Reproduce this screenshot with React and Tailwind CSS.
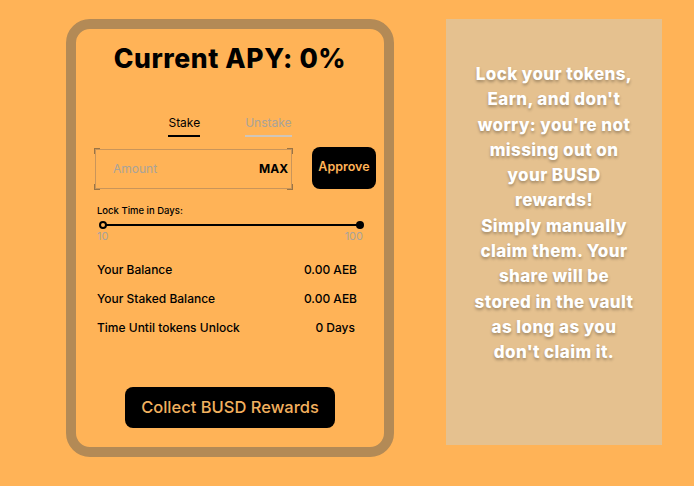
import React, { useState } from "react";

const panelLines = [
  "Lock your tokens,",
  "Earn, and don't",
  "worry: you're not",
  "missing out on",
  "your BUSD",
  "rewards!",
  "Simply manually",
  "claim them. Your",
  "share will be",
  "stored in the vault",
  "as long as you",
  "don't claim it.",
];

const Tab = ({ label, active, onClick }) => (
  <button className="flex flex-col items-stretch" onClick={onClick}>
    <span className={active ? "text-black" : "text-[#a9a39a]"}>{label}</span>
    <span className={"mt-[3px] h-[2px] " + (active ? "bg-black" : "bg-[#cfc6ba]")} />
  </button>
);

const StakeCard = () => {
  const [tab, setTab] = useState("stake");
  const [amount, setAmount] = useState("");

  return (
    <div className="w-[328px] h-[438px] rounded-[24px] border-[10px] border-[#b38a56] bg-[#ffb357] flex flex-col items-center">
      <div className="mt-[9px] text-[26.5px] leading-[40px] font-extrabold text-black tracking-[0.6px]">
        Current APY: 0%
      </div>

      <div className="mt-[36px] flex gap-[45px] text-[12px] leading-[18px]">
        <Tab label="Stake" active={tab === "stake"} onClick={() => setTab("stake")} />
        <Tab label="Unstake" active={tab === "unstake"} onClick={() => setTab("unstake")} />
      </div>

      <div className="mt-[12px] w-full pl-[19px] pr-[8px] flex items-center justify-between">
        <div className="relative w-[197px] h-[40px] border border-[#c9955a] flex items-center pl-[17px] pr-[3px]">
          <span className="absolute -left-[2px] -top-[2px] w-[6px] h-[6px] border-l border-t border-[#9a7444]" />
          <span className="absolute -right-[2px] -top-[2px] w-[6px] h-[6px] border-r border-t border-[#9a7444]" />
          <span className="absolute -left-[2px] -bottom-[2px] w-[6px] h-[6px] border-l border-b border-[#9a7444]" />
          <span className="absolute -right-[2px] -bottom-[2px] w-[6px] h-[6px] border-r border-b border-[#9a7444]" />
          <input
            value={amount}
            onChange={(e) => setAmount(e.target.value)}
            placeholder="Amount"
            className="flex-1 min-w-0 bg-transparent outline-none text-[12px] placeholder:text-[#a9a39a]"
          />
          <span className="text-[12px] font-bold text-black">MAX</span>
        </div>
        <button className="w-[64px] h-[42px] -mt-[3px] rounded-[8px] bg-black text-[#ffb357] text-[12.5px] font-semibold">
          Approve
        </button>
      </div>

      <div className="mt-[15px] w-full px-[21px]">
        <div className="text-[9.5px] leading-[14px] text-black font-medium">Lock Time in Days:</div>
        <div className="relative mt-[3px] h-[8px] mx-[3px]">
          <div className="absolute left-0 right-0 top-[3px] h-[2px] bg-black" />
          <div className="absolute -left-[1px] top-0 w-[8px] h-[8px] rounded-full border-2 border-black bg-[#ffb357]" />
          <div className="absolute -right-[4px] top-0 w-[8px] h-[8px] rounded-full bg-black" />
        </div>
        <div className="flex justify-between text-[11px] leading-[14px] text-[#a9a39a]">
          <span>10</span>
          <span>100</span>
        </div>
      </div>

      <div className="mt-[18px] w-full pl-[21px] pr-[27px] flex flex-col gap-[11px] text-[12px] leading-[18px] font-medium text-black">
        <div className="flex justify-between">
          <span>Your Balance</span>
          <span>0.00 AEB</span>
        </div>
        <div className="flex justify-between">
          <span>Your Staked Balance</span>
          <span>0.00 AEB</span>
        </div>
        <div className="flex justify-between">
          <span>Time Until tokens Unlock</span>
          <span className="pr-[2px]">0 Days</span>
        </div>
      </div>

      <button className="mt-[50px] w-[210px] h-[41px] rounded-[8px] bg-black text-[#f2b15f] text-[16.5px] font-medium">
        Collect BUSD Rewards
      </button>
    </div>
  );
};

const InfoPanel = () => (
  <div className="w-[216px] h-[426px] bg-[#e5c18f] pt-[43px] flex flex-col items-center text-white text-[17px] font-extrabold leading-[25.3px] tracking-[0.4px] [text-shadow:0_2px_3px_rgba(0,0,0,0.3)]">
    {panelLines.map((line) => (
      <div key={line} className="whitespace-nowrap">
        {line}
      </div>
    ))}
  </div>
);

export default function App() {
  return (
    <div
      className="w-[694px] h-[486px] bg-[#ffb357] flex items-start pt-[19px] pl-[66px] gap-[52px]"
      style={{ fontFamily: "Inter, 'Noto Sans', sans-serif" }}
    >
      <StakeCard />
      <InfoPanel />
    </div>
  );
}
